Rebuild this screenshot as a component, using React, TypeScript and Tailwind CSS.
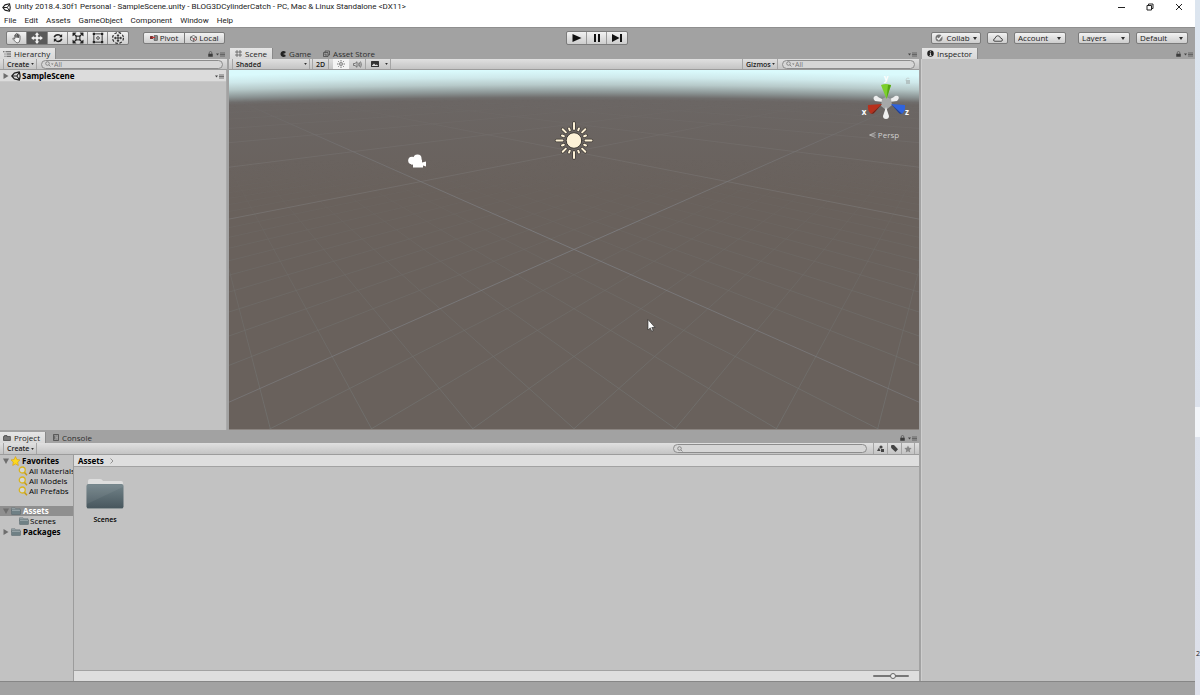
import React from "react";

const HORIZON = 4.8;
const DEPTH = 7.908;

function project(i: number, j: number) {
  const w = DEPTH - (i + j) / 2;
  return { x: 345 + (((i - j) / 2) * 395.6) / w, y: HORIZON + 1385 / w };
}

function buildGrid() {
  const lines: { key: string; x1: number; y1: number; x2: number; y2: number; kind: string }[] = [];
  for (let c = -130; c <= 24; c++) {
    const kind = c === 0 ? "axis" : c % 10 === 0 ? "major" : "minor";
    if (kind === "minor" && c < -22) continue;
    const near = Math.min(2 * (DEPTH - 1.5) - c, 60);
    const far = -160;
    if (near <= far) continue;
    const a = project(c, far);
    const b = project(c, near);
    lines.push({ key: `i${c}`, x1: a.x, y1: a.y, x2: b.x, y2: b.y, kind });
    lines.push({ key: `j${c}`, x1: 690 - a.x, y1: a.y, x2: 690 - b.x, y2: b.y, kind });
  }
  return lines;
}

const gridLines = buildGrid();

const menus = ["File", "Edit", "Assets", "GameObject", "Component", "Window", "Help"];

const favorites = ["All Materials", "All Models", "All Prefabs"];

const buttonFace = "border border-[#7b7b7b] bg-linear-to-b from-[#f2f2f2] to-[#cdcdcd]";
const barFace = "bg-linear-to-b from-[#e0e0e0] to-[#c4c4c4] border-b border-[#9c9c9c]";
const boldLabel = "font-['Noto_Sans',sans-serif] font-bold";

function UnityLogo({ className }: { className: string }) {
  return (
    <svg viewBox="0 0 24 24" className={className} fill="none" stroke="#1c1c1c" strokeLinejoin="round">
      <path d="M2 12 8 5 20 2 22 12 20 22 8 19Z" strokeWidth="3" />
      <path d="M3 12H14L20 3M14 12 20 21" strokeWidth="2.6" />
    </svg>
  );
}

function Caret({ className = "w-1 h-[3px]" }: { className?: string }) {
  return (
    <svg viewBox="0 0 4 3" className={`shrink-0 ${className}`} fill="#2e2e2e">
      <path d="M0 0H4L2 3Z" />
    </svg>
  );
}

function LockIcon() {
  return (
    <svg viewBox="0 0 10 12" className="w-[5px] h-[6px]">
      <path d="M2.5 6V3.5Q2.5 1 5 1Q7.5 1 7.5 3.5V6" fill="none" stroke="#555" strokeWidth="1.5" />
      <rect x="0.5" y="5.5" width="9" height="6" fill="#3c3c3c" />
    </svg>
  );
}

function PaneMenu({ lock = false }: { lock?: boolean }) {
  return (
    <div className="ml-auto flex items-center gap-[3px] pr-0.5 pt-px">
      {lock && (
        <button aria-label="Lock pane">
          <LockIcon />
        </button>
      )}
      <button aria-label="Pane options">
        <svg viewBox="0 0 18 10" className="w-[9px] h-[5px]">
          <path d="M0 3H6L3 7Z" fill="#444" />
          <path d="M8 2H18M8 5H18M8 8H18" stroke="#555" strokeWidth="1.6" />
        </svg>
      </button>
    </div>
  );
}

function Tab({ label, active = false, children, className = "" }: { label: string; active?: boolean; children: React.ReactNode; className?: string }) {
  return (
    <button
      className={`flex items-center gap-[3px] h-[11px] ${
        active ? "bg-linear-to-b from-[#e6e6e6] to-[#d8d8d8] border-r border-[#8a8a8a] text-[#222]" : "text-[#2e2e2e]"
      } ${className}`}
    >
      {children}
      {label}
    </button>
  );
}

function Dropdown({ label, className = "", small = false }: { label: string; className?: string; small?: boolean }) {
  return (
    <div className={`relative flex items-center ${className}`}>
      <select aria-label={label} className="appearance-none w-full h-full pl-[3px] bg-transparent leading-none">
        <option>{label}</option>
      </select>
      <Caret className={`absolute pointer-events-none ${small ? "right-0.5 w-[3px] h-0.5" : "right-1 w-1 h-[3px]"}`} />
    </div>
  );
}

function SearchField({ label, placeholder, className, arrow = false }: { label: string; placeholder?: string; className: string; arrow?: boolean }) {
  return (
    <div className={`flex items-center h-[9px] rounded-full border border-[#8c8c8c] bg-[#d6d6d6] px-[3px] ${className}`}>
      <svg viewBox="0 0 18 12" className="w-[9px] h-[6px] shrink-0" fill="none" stroke="#777" strokeWidth="1.6">
        <circle cx="5" cy="5" r="3.6" />
        <path d="M8 8 11 11" />
        {arrow && <path d="M12 5H17L14.500 8Z" fill="#777" stroke="none" />}
      </svg>
      <input aria-label={label} placeholder={placeholder} className="w-full h-[7px] min-w-0 bg-transparent outline-none text-[7px] leading-none placeholder:text-[#777]" />
    </div>
  );
}

function CreateButton() {
  return (
    <button className="flex items-center justify-between w-[34px] h-full ml-[3px] pl-[3px] pr-0.5 border-x border-[#a5a5a5] font-semibold">
      Create <Caret className="w-[3px] h-0.5" />
    </button>
  );
}

function Folder({ className }: { className: string }) {
  return (
    <svg viewBox="0 0 38 32" className={className}>
      <defs>
        <linearGradient id="folderFace" x1="0" y1="0" x2="0" y2="1">
          <stop offset="0" stopColor="#73848a" />
          <stop offset="1" stopColor="#47565d" />
        </linearGradient>
      </defs>
      <path d="M2 8V3Q2 1 4 1H14Q16 1 17 3H35Q37 3 37 5V10H2Z" fill="#dedede" />
      <rect x="0.500" y="6" width="37" height="24.500" rx="2" fill="url(#folderFace)" />
      <path d="M1 26 37 9V8Q37 6.500 35 6.500H3Q1 6.500 1 8Z" fill="#fff" opacity="0.06" />
      <path d="M1.500 30.500H36.500" stroke="#8e9799" strokeWidth="1" />
    </svg>
  );
}

function SmallFolder() {
  return (
    <svg viewBox="0 0 20 16" className="w-[10px] h-2 shrink-0">
      <path d="M1 4V1.500H8L9.500 3.500H18V6H1Z" fill="#9aa5a8" stroke="#5e6c70" />
      <rect x="1" y="5.500" width="18" height="9.500" rx="1" fill="#6f8085" stroke="#56646a" />
      <path d="M2 6.500H18" stroke="#b4bfc2" strokeWidth="1.500" />
    </svg>
  );
}

function Foldout({ open = false }: { open?: boolean }) {
  return (
    <svg viewBox="0 0 6 6" className="w-[6px] h-[6px] shrink-0" fill="#6e6e6e">
      <path d={open ? "M0 0.500H6L3 6Z" : "M0.500 0 5.500 3 0.500 6Z"} />
    </svg>
  );
}

function TransformTools() {
  const tools = [
    {
      name: "Hand",
      icon: (
        <path d="M6 13 2.500 9.500Q2 8 3.500 8.300L5 9.500V4Q5.800 2.800 6.600 4V7.500V2.500Q7.500 1.300 8.400 2.500V7.500V2.800Q9.400 1.700 10.200 3V7.800V4.600Q11.200 3.600 12 4.800V9.500Q12 14.500 8.500 14.500Q7 14.500 6 13Z" fill="#f4f4f4" strokeWidth="0.800" />
      ),
    },
    {
      name: "Move",
      icon: <path d="M8 0.500 10.500 3.500H9V7H12.500V5.500L15.500 8 12.500 10.500V9H9V12.500H10.500L8 15.500 5.500 12.500H7V9H3.500V10.500L0.500 8 3.500 5.500V7H7V3.500H5.500Z" strokeWidth="0.400" />,
    },
    {
      name: "Rotate",
      icon: (
        <>
          <path d="M3 7Q4 3.500 8 3.500Q10.500 3.500 12 5.500M13 9Q12 12.500 8 12.500Q5.500 12.500 4 10.500" fill="none" strokeWidth="2" />
          <path d="M13.500 2.500V7H9.500ZM2.500 13.500V9H6.500Z" strokeWidth="0" />
        </>
      ),
    },
    {
      name: "Scale",
      icon: (
        <>
          <path d="M3 3 13 13M13 3 3 13" strokeWidth="1.500" />
          <path d="M1 1H5.500L1 5.500ZM15 1H10.500L15 5.500ZM1 15H5.500L1 10.500ZM15 15H10.500L15 10.500Z" strokeWidth="0.500" />
          <rect x="5.500" y="5.500" width="5" height="5" fill="#ddd" strokeWidth="1.400" />
        </>
      ),
    },
    {
      name: "Rect",
      icon: (
        <>
          <rect x="2.500" y="2.500" width="11" height="11" fill="none" strokeWidth="1.200" />
          <circle cx="8" cy="8" r="1.800" fill="none" strokeWidth="1" />
          <path d="M1 1H4V4H1ZM12 1H15V4H12ZM1 12H4V15H1ZM12 12H15V15H12Z" strokeWidth="0" />
        </>
      ),
    },
    {
      name: "Transform",
      icon: (
        <>
          <circle cx="8" cy="8" r="7.200" fill="none" strokeWidth="1.500" strokeDasharray="3.500 2.150" />
          <path d="M8 4V12M4 8H12" strokeWidth="1.200" />
          <path d="M8 2.500 10 5H6ZM8 13.500 10 11H6ZM2.500 8 5 6V10ZM13.500 8 11 6V10Z" strokeWidth="0" />
        </>
      ),
    },
  ];
  return (
    <div className={`flex rounded-[2px] overflow-hidden h-[14px] ${buttonFace}`}>
      {tools.map((tool) => (
        <button
          key={tool.name}
          aria-label={tool.name}
          className={`flex items-center justify-center border-r border-[#8a8a8a] last:border-r-0 ${
            tool.name === "Move" ? "w-[21px] bg-[#5a5a5a]" : "w-5"
          }`}
        >
          <svg viewBox="0 0 16 16" className={`w-3 h-3 ${tool.name === "Move" ? "fill-white stroke-white" : "fill-[#222] stroke-[#222]"}`}>
            {tool.icon}
          </svg>
        </button>
      ))}
    </div>
  );
}

function MainToolbar() {
  return (
    <div className="grid grid-cols-[1fr_auto_1fr] items-center h-[21px] shrink-0 border-t border-[#8f8f8f] pl-1.5 pr-[7px] text-[8px]">
      <div className="flex items-center gap-3.5">
        <TransformTools />
        <div className={`flex h-[12px] rounded-[2px] ${buttonFace}`}>
          <button className="flex items-center justify-center gap-0.5 w-[41px] border-r border-[#7b7b7b]">
            <svg viewBox="0 0 16 12" className="w-2 h-[6px]">
              <rect x="0" y="2" width="6" height="6" rx="1" fill="#7c2f2f" />
              <rect x="8" y="0.500" width="7" height="11" rx="2" fill="#888" stroke="#333" />
              <path d="M4 5H10" stroke="#c33" strokeWidth="2" />
            </svg>
            Pivot
          </button>
          <button className="flex items-center justify-center gap-0.5 w-[39px]">
            <svg viewBox="0 0 14 14" className="w-[7px] h-[7px]" fill="none" stroke="#444" strokeWidth="1.300">
              <path d="M7 1 13 4V10L7 13 1 10V4ZM1 4 7 7 13 4M7 7V13" />
              <path d="M7 7 11 10" stroke="#c33" strokeWidth="2" />
            </svg>
            Local
          </button>
        </div>
      </div>

      <div className={`flex h-[14px] rounded-[2px] ${buttonFace}`}>
        <button aria-label="Play" className="flex items-center justify-center w-5 border-r border-[#9a9a9a]">
          <svg viewBox="0 0 10 8" className="w-[10px] h-2"><path d="M0.500 0 9.500 4 0.500 8Z" fill="#111" /></svg>
        </button>
        <button aria-label="Pause" className="flex items-center justify-center w-5 border-r border-[#9a9a9a]">
          <svg viewBox="0 0 10 8" className="w-[10px] h-2"><path d="M2 0H4V8H2ZM6 0H8V8H6Z" fill="#111" /></svg>
        </button>
        <button aria-label="Step" className="flex items-center justify-center w-5">
          <svg viewBox="0 0 10 8" className="w-[10px] h-2"><path d="M0 0 7.500 4 0 8ZM8 0H10V8H8Z" fill="#111" /></svg>
        </button>
      </div>

      <div className="flex justify-end items-center">
        <button className={`flex items-center justify-center gap-[3px] w-[50px] h-[12px] rounded-[2px] ${buttonFace}`}>
          <svg viewBox="0 0 16 16" className="w-2 h-2">
            <circle cx="8" cy="8" r="7" fill="#777" />
            <path d="M4 7.500 7.500 11 14 3" fill="none" stroke="#f2f2f2" strokeWidth="2.400" />
          </svg>
          Collab
          <Caret />
        </button>
        <button aria-label="Cloud services" className={`flex items-center justify-center w-[21px] h-[12px] ml-1.5 rounded-[2px] ${buttonFace}`}>
          <svg viewBox="0 0 20 14" className="w-[10px] h-[7px]" fill="none" stroke="#333" strokeWidth="1.700">
            <path d="M4 12.500Q1 12.500 1 10Q1 8 4 7Q5 2 9.500 1.500Q14 1.500 15 6Q19 7 19 10Q18.500 12.500 16 12.500Z" />
          </svg>
        </button>
        <Dropdown label="Account" className={`w-[52px] h-[12px] ml-1.5 rounded-[2px] ${buttonFace}`} />
        <Dropdown label="Layers" className={`w-[52px] h-[12px] ml-3 rounded-[2px] ${buttonFace}`} />
        <Dropdown label="Default" className={`w-[52px] h-[12px] ml-1.5 rounded-[2px] ${buttonFace}`} />
      </div>
    </div>
  );
}

function Hierarchy() {
  return (
    <section className="flex flex-col w-[227px] shrink-0">
      <div className="flex">
        <Tab label="Hierarchy" active className="pl-[3px] pr-[5px]">
          <svg viewBox="0 0 16 12" className="w-2 h-[6px]" stroke="#333" strokeWidth="1.600">
            <path d="M0 1.500H3M5 1.500H16M3 6H5M7 6H16M3 10.500H5M7 10.500H16" />
          </svg>
        </Tab>
        <PaneMenu lock />
      </div>
      <div className={`flex items-center h-[11px] shrink-0 text-[7px] ${barFace}`}>
        <CreateButton />
        <SearchField label="Search hierarchy" placeholder="All" arrow className="flex-1 ml-1 mr-1" />
      </div>
      <div className="flex-1 bg-[#c2c2c2] border-r border-[#aaa]">
        <div className={`flex items-center h-[12px] bg-[#dcdcdc] border-b border-[#c9c9c9] pl-[3px] text-black ${boldLabel}`}>
          <Foldout />
          <UnityLogo className="w-[10px] h-[10px] ml-0.5 mr-px" />
          SampleScene
          <PaneMenu />
        </div>
      </div>
    </section>
  );
}

function OrientationGizmo() {
  return (
    <div className="absolute top-0 right-0 w-[70px] flex flex-col items-center text-[#d0d0d0]">
      <svg viewBox="0 0 70 60" className="w-[70px] h-[60px]">
        <path d="M57 11V10Q57 8 59 8Q60 8 60 9" fill="none" stroke="#c4d3d3" strokeWidth="1" />
        <rect x="57" y="10" width="4" height="4" fill="#b4c3c3" />
        <path d="M34 32 26 31Q23 28 26 26Q28 25 29 27L35 30ZM40 32 48 31Q51 28 49 26Q46 25 45 27L39 30Z" fill="#eee" />
        <path d="M33 29 37 27 42 29 43 35 37 40 32 36Z" fill="#a6a8a8" />
        <path d="M32 15Q37 13 42 15L37.500 29Z" fill="#7ccf2c" />
        <path d="M39 15 42 15 37.500 29Z" fill="#55a514" />
        <path d="M33 34 19 35Q18 40 22 44Z" fill="#b7301c" />
        <path d="M33 34 22 44Q25 44 26 42Z" fill="#7d1d10" />
        <path d="M42 34 56 35Q57 40 53 44Z" fill="#2f63de" />
        <path d="M42 34 53 44Q50 44 49 42Z" fill="#173f9f" />
        <path d="M37 37 34 46Q34 49 37 49Q40 49 40 46Z" fill="#f0f0f0" />
        <g fill="#fff" fontSize="8" fontWeight="bold" fontFamily="Open Sans, sans-serif" textAnchor="middle">
          <text x="37" y="11">y</text>
          <text x="15" y="45">x</text>
          <text x="58" y="45">z</text>
        </g>
      </svg>
      <button className="flex items-center gap-0.5 h-2.5">
        <svg viewBox="0 0 14 12" className="w-[7px] h-[6px]" fill="none" stroke="#c8c8c8" strokeWidth="1.500">
          <path d="M13 1 1 6 13 11M3 6H13" />
        </svg>
        Persp
      </button>
    </div>
  );
}

function rayPath(n: number) {
  if (n % 4 === 0) return "M0 -11.500V-17.500";
  return n % 2 === 0 ? "M0 -11.500V-16" : "M0 -11V-13";
}

function SceneCanvas() {
  const strokes: Record<string, string> = { axis: "#83858a", major: "#7c7a79", minor: "#757877" };
  const rays = Array.from({ length: 16 }, (_, n) => n);
  return (
    <div className="relative flex-1 min-h-0 overflow-hidden bg-[#69615c] border-b border-[#8a8480]">
      <svg viewBox="0 0 690 360" preserveAspectRatio="xMidYMid slice" className="absolute inset-0 w-full h-full">
        <defs>
          <radialGradient id="sky" gradientUnits="userSpaceOnUse" cx="345" cy="11930" r="12000">
            <stop offset="0.984" stopColor="#69615c" />
            <stop offset="0.99160" stopColor="#6b6664" />
            <stop offset="0.99183" stopColor="#6f6d6c" />
            <stop offset="0.99225" stopColor="#8b9494" />
            <stop offset="0.99290" stopColor="#b7caca" />
            <stop offset="0.99350" stopColor="#cfe9eb" />
            <stop offset="0.99410" stopColor="#dafafc" />
          </radialGradient>
          <linearGradient id="farFade" x1="0" y1="0" x2="0" y2="1">
            <stop offset="0.08" stopColor="#fff" stopOpacity="0" />
            <stop offset="0.22" stopColor="#fff" stopOpacity="0.450" />
            <stop offset="0.45" stopColor="#fff" stopOpacity="0.850" />
            <stop offset="1" stopColor="#fff" stopOpacity="0.600" />
          </linearGradient>
          <linearGradient id="minorFade" x1="0" y1="0" x2="0" y2="1">
            <stop offset="0.25" stopColor="#fff" stopOpacity="0" />
            <stop offset="0.5" stopColor="#fff" stopOpacity="0.350" />
            <stop offset="1" stopColor="#fff" stopOpacity="0.850" />
          </linearGradient>
          <mask id="majorMask" maskUnits="userSpaceOnUse" x="0" y="0" width="690" height="360">
            <rect width="690" height="360" fill="url(#farFade)" />
          </mask>
          <mask id="minorMask" maskUnits="userSpaceOnUse" x="0" y="0" width="690" height="360">
            <rect width="690" height="360" fill="url(#minorFade)" />
          </mask>
        </defs>
        <rect width="690" height="360" fill="url(#sky)" />
        <g mask="url(#minorMask)">
          {gridLines.filter((l) => l.kind === "minor").map((l) => (
            <line key={l.key} x1={l.x1} y1={l.y1} x2={l.x2} y2={l.y2} stroke={strokes.minor} strokeWidth="0.700" />
          ))}
        </g>
        <g mask="url(#majorMask)">
          {gridLines.filter((l) => l.kind !== "minor").map((l) => (
            <line key={l.key} x1={l.x1} y1={l.y1} x2={l.x2} y2={l.y2} stroke={strokes[l.kind]} strokeWidth="0.800" />
          ))}
        </g>

        {/* Directional light */}
        <g transform="translate(345 71)" strokeLinecap="round">
          {rays.map((n) => (
            <path key={n} d={rayPath(n)} transform={`rotate(${n * 22.5})`} stroke="#3d3833" strokeWidth="3.400" />
          ))}
          {rays.map((n) => (
            <path key={n} d={rayPath(n)} transform={`rotate(${n * 22.5})`} stroke="#fdf1d6" strokeWidth="2" />
          ))}
          <circle r="7.800" fill="#fdf1d6" stroke="#3d3833" strokeWidth="1" />
        </g>

        {/* Camera */}
        <g fill="#fff">
          <circle cx="183" cy="91" r="3.800" />
          <circle cx="188.500" cy="89" r="4" />
          <path d="M182 90H193V93L197 92V97L194 96V98H184V95H182Z" />
        </g>

        {/* Cursor */}
        <path d="M419 250V260.500L421.300 258.400 422.700 261.700 424.200 261 422.800 258H426Z" fill="#fff" stroke="#222" strokeWidth="0.600" />
      </svg>
      <OrientationGizmo />
    </div>
  );
}

function SceneView() {
  return (
    <section className="flex flex-col flex-1 min-w-0">
      <div className="flex">
        <Tab label="Scene" active className="ml-px pl-[5px] pr-[5px]">
          <svg viewBox="0 0 14 14" className="w-[7px] h-[7px]" stroke="#444" strokeWidth="1.300">
            <path d="M4 0V14M10 0V14M0 4H14M0 10H14" />
          </svg>
        </Tab>
        <Tab label="Game" className="ml-[7px] w-[34px]">
          <svg viewBox="0 0 12 12" className="w-[6px] h-[6px]" fill="#222">
            <path d="M11 1Q6 -1 2.500 2Q-0.500 6 2.500 10Q6 13 11 11L11 8 6 6 11 4Z" />
          </svg>
        </Tab>
        <Tab label="Asset Store" className="ml-[9px]">
          <svg viewBox="0 0 14 14" className="w-[7px] h-[7px]" fill="none" stroke="#444" strokeWidth="1.500">
            <path d="M1 5H10V13H1ZM4 5V2H13V10H10M4 7V10H8" />
          </svg>
        </Tab>
        <PaneMenu />
      </div>
      <div className={`flex items-center h-[11px] shrink-0 text-[7px] ${barFace}`}>
        <Dropdown label="Shaded" small className="w-[78px] h-full ml-[3px] border-x border-[#a5a5a5] font-semibold" />
        <button className="w-[17px] h-full ml-0.5 border-x border-[#a5a5a5] font-semibold">2D</button>
        <button aria-label="Scene lighting" className="flex items-center justify-center w-4 h-full ml-1 bg-[#f4f4f4]">
          <svg viewBox="0 0 16 16" className="w-2 h-2" fill="none" stroke="#444" strokeWidth="1.400">
            <circle cx="8" cy="8" r="2.800" />
            <path d="M8 0V3M8 13V16M0 8H3M13 8H16M2.500 2.500 4.500 4.500M11.500 11.500 13.500 13.500M2.500 13.500 4.500 11.500M11.500 4.500 13.500 2.500" />
          </svg>
        </button>
        <button aria-label="Scene audio" className="flex items-center justify-center w-[17px] h-full border-r border-[#a5a5a5]">
          <svg viewBox="0 0 18 14" className="w-[9px] h-[7px]" fill="none" stroke="#555" strokeWidth="1.400">
            <path d="M1 5H4L8 1.500V12.500L4 9H1Z" />
            <path d="M10.500 4.500Q12 7 10.500 9.500M12.500 2.500Q15 7 12.500 11.500M15 1Q18.500 7 15 13" />
          </svg>
        </button>
        <button aria-label="Scene effects" className="flex items-center justify-center w-[17px] h-full">
          <svg viewBox="0 0 16 12" className="w-2 h-[6px]">
            <rect width="16" height="12" rx="1" fill="#333" />
            <path d="M2 9 6 5 9 8 11 7 14 9V10H2Z" fill="#ddd" />
          </svg>
        </button>
        <button aria-label="Effects menu" className="flex items-center justify-center w-2 h-full border-r border-[#a5a5a5]">
          <Caret className="w-[3px] h-0.5" />
        </button>
        <Dropdown label="Gizmos" small className="w-[36px] h-full ml-auto border-x border-[#a5a5a5] font-semibold" />
        <SearchField label="Search scene" placeholder="All" arrow className="w-[133px] ml-1 mr-1" />
      </div>
      <SceneCanvas />
    </section>
  );
}

function ProjectTree() {
  return (
    <nav className="w-[74px] shrink-0 overflow-hidden bg-[#c2c2c2] border-r border-[#9c9c9c] whitespace-nowrap text-black leading-[10px]">
      <div className={`flex items-center gap-px h-[11px] pl-[3px] ${boldLabel}`}>
        <Foldout open />
        <svg viewBox="0 0 20 20" className="w-[11px] h-[10px] shrink-0">
          <path d="M10 1 12.800 7 19 7.800 14.500 12.200 15.600 19 10 15.800 4.400 19 5.500 12.200 1 7.800 7.200 7Z" fill="#fbd81e" stroke="#d59b10" strokeWidth="1.200" />
        </svg>
        Favorites
      </div>
      {favorites.map((item) => (
        <a key={item} href="#" className="flex items-center gap-px h-[10px] pl-[18px]">
          <svg viewBox="0 0 20 20" className="w-[10px] h-[10px] shrink-0" fill="#d5d8d8">
            <circle cx="8.500" cy="8" r="6" stroke="#d9b521" strokeWidth="2.600" />
            <path d="M13 13 18 18.500" stroke="#c79d15" strokeWidth="3" />
          </svg>
          {item}
        </a>
      ))}
      <a href="#" className={`flex items-center gap-0.5 h-[10px] mt-2.5 pl-[3px] bg-[#8f8f8f] text-white ${boldLabel}`}>
        <Foldout open />
        <SmallFolder />
        Assets
      </a>
      <a href="#" className="flex items-center gap-px h-[10px] pl-[19px]">
        <SmallFolder />
        Scenes
      </a>
      <a href="#" className={`flex items-center gap-0.5 h-[11px] pl-[3px] ${boldLabel}`}>
        <Foldout />
        <SmallFolder />
        Packages
      </a>
    </nav>
  );
}

function Project() {
  return (
    <section className="flex flex-col flex-[249] min-h-0">
      <div className="flex">
        <Tab label="Project" active className="pl-[3px] pr-[5px] w-[46px]">
          <svg viewBox="0 0 16 12" className="w-2 h-[6px]" fill="#777" stroke="#333" strokeWidth="1.300">
            <path d="M1 3H3V1H8V3H15V11H1Z" />
          </svg>
        </Tab>
        <Tab label="Console" className="ml-[7px]">
          <svg viewBox="0 0 12 14" className="w-[6px] h-[7px]" fill="none" stroke="#333" strokeWidth="1.300">
            <path d="M1 1H11V13H1ZM3.500 3V11M7 4H8.500M7 10H8.500" />
          </svg>
        </Tab>
        <PaneMenu lock />
      </div>
      <div className={`flex items-center h-[12px] shrink-0 text-[7px] ${barFace}`}>
        <CreateButton />
        <SearchField label="Search project" className="w-[194px] ml-auto mr-1.5" />
        <button aria-label="Search by type" className="flex items-center justify-center w-[14px] h-full border-l border-[#a5a5a5]">
          <svg viewBox="0 0 14 14" className="w-[7px] h-[7px]" fill="#444">
            <path d="M0 12 4 5 7 12Z" />
            <circle cx="8" cy="4" r="3.200" />
            <rect x="8" y="8" width="6" height="6" />
          </svg>
        </button>
        <button aria-label="Search by label" className="flex items-center justify-center w-[14px] h-full border-l border-[#a5a5a5]">
          <svg viewBox="0 0 14 14" className="w-[7px] h-[7px]" fill="#444">
            <path d="M0 1.500 1.500 0H6L14 8.500 9 14 0.500 6Z" />
          </svg>
        </button>
        <button aria-label="Save search" className="flex items-center justify-center w-[14px] h-full border-x border-[#a5a5a5] mr-1">
          <svg viewBox="0 0 20 20" className="w-2 h-2" fill="#888">
            <path d="M10 1 12.800 7 19 7.800 14.500 12.200 15.600 19 10 15.800 4.400 19 5.500 12.200 1 7.800 7.200 7Z" />
          </svg>
        </button>
      </div>
      <div className="flex flex-1 min-h-0">
        <ProjectTree />
        <div className="flex flex-col flex-1 min-w-0 bg-[#c2c2c2]">
          <div className={`flex items-center gap-1.5 h-[12px] shrink-0 pl-1 bg-[#dedede] border-b border-[#a2a2a2] text-black ${boldLabel}`}>
            Assets
            <svg viewBox="0 0 8 12" className="w-1 h-[6px]" fill="none" stroke="#777" strokeWidth="1.500">
              <path d="M1 1 6 6 1 11" />
            </svg>
          </div>
          <div className="flex-1 p-3 pt-[11px]">
            <button className="flex flex-col items-center">
              <Folder className="w-[38px] h-8" />
              <span className="mt-[5px] text-[7px] leading-[9px] font-semibold text-black">Scenes</span>
            </button>
          </div>
          <div className="flex items-center justify-end h-[11px] shrink-0 pr-2.5 bg-[#dedede] border-t border-[#a2a2a2]">
            <input
              type="range"
              aria-label="Icon size"
              defaultValue={58}
              className="appearance-none w-[36px] h-[2px] rounded-full bg-[#777] [&::-webkit-slider-thumb]:appearance-none [&::-webkit-slider-thumb]:w-[6px] [&::-webkit-slider-thumb]:h-[6px] [&::-webkit-slider-thumb]:rounded-full [&::-webkit-slider-thumb]:bg-[#eee] [&::-webkit-slider-thumb]:border [&::-webkit-slider-thumb]:border-[#666]"
            />
          </div>
        </div>
      </div>
    </section>
  );
}

function Inspector() {
  return (
    <section className="flex flex-col w-[274px] shrink-0">
      <div className="flex">
        <Tab label="Inspector" active className="ml-px pl-[5px] pr-[5px]">
          <svg viewBox="0 0 14 14" className="w-[7px] h-[7px]">
            <circle cx="7" cy="7" r="6.500" fill="#222" />
            <path d="M7 2.500V4.500M5.500 6.500H7V11M5 11H9" stroke="#eee" strokeWidth="1.600" fill="none" />
          </svg>
        </Tab>
        <PaneMenu lock />
      </div>
      <div className="flex-1 bg-[#c2c2c2] border-l border-[#cecece]" />
    </section>
  );
}

export default function App() {
  return (
    <div className="flex h-screen overflow-hidden font-['Open_Sans','Noto_Sans',sans-serif] text-[8px] leading-none text-[#1a1a1a]">
      <div className="flex flex-col flex-1 min-w-0 bg-[#a2a2a2]">
        <header className="h-[27px] shrink-0 bg-white text-[#222]">
          <div className="flex items-center h-[14px]">
            <UnityLogo className="w-[9px] h-[9px] ml-0.5 mr-1" />
            <h1 className="font-['Roboto',sans-serif] text-[8px]">
              Unity 2018.4.30f1 Personal - SampleScene.unity - BLOG3DCylinderCatch - PC, Mac &amp; Linux Standalone &lt;DX11&gt;
            </h1>
            <div className="flex items-center gap-[21px] ml-auto pr-3">
              <button aria-label="Minimize">
                <svg viewBox="0 0 8 8" className="w-2 h-2" stroke="#222"><path d="M1 4.500H8" /></svg>
              </button>
              <button aria-label="Restore">
                <svg viewBox="0 0 8 8" className="w-2 h-2" fill="none" stroke="#222"><path d="M1 2.500H5.500V7H1ZM2.500 2V1H7V5.500H6" /></svg>
              </button>
              <button aria-label="Close">
                <svg viewBox="0 0 8 8" className="w-2 h-2" stroke="#222"><path d="M1 1 7 7M7 1 1 7" /></svg>
              </button>
            </div>
          </div>
          <nav className="flex items-center gap-2 h-[13px] pt-px pl-1 font-['Roboto',sans-serif] text-[8px]">
            {menus.map((menu) => (
              <button key={menu}>{menu}</button>
            ))}
          </nav>
        </header>

        <MainToolbar />

        <div className="flex flex-1 min-h-0 gap-0.5">
          <div className="flex flex-col flex-1 min-w-0 gap-0.5">
            <div className="flex flex-[382] min-h-0 gap-0.5">
              <Hierarchy />
              <SceneView />
            </div>
            <Project />
          </div>
          <Inspector />
        </div>
        <footer className="h-[14px] shrink-0 border-t border-[#868686]" />
      </div>
      <aside className="flex flex-col w-[5px] shrink-0 overflow-hidden bg-linear-to-b from-[#dce5ef] to-[#dde0ea] text-[7px]">
        <div className="flex-[407]" />
        <div className="flex-[30] bg-[#f3f6fa]" />
        <div className="flex-[213]" />
        <div className="flex-[45] pl-px">2</div>
      </aside>
    </div>
  );
}
